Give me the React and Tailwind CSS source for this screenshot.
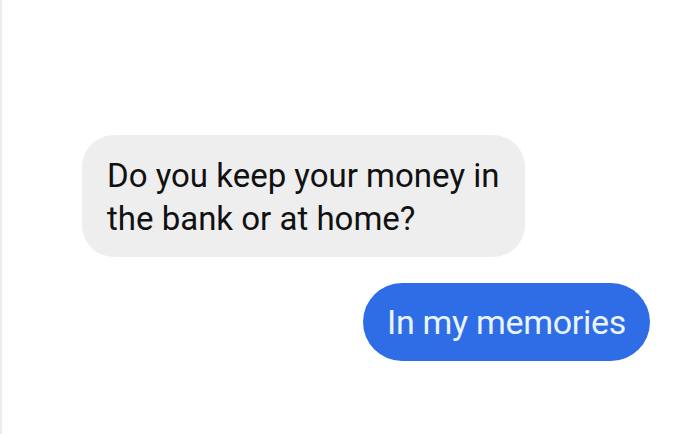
import React from "react";

const App = () => {
  return (
    <div
      className="w-[700px] h-[434px] bg-white border-l-2 border-[#ececec] flex flex-col overflow-hidden"
      style={{ fontFamily: "Roboto, 'Liberation Sans', sans-serif" }}
    >
      <div className="pt-[135px] pl-[80px]">
        <div className="w-[443px] h-[122px] bg-[#eeeeee] rounded-[32px] pl-[25px] pt-[19px] text-[33px] leading-[43px] text-[#111111] whitespace-nowrap">
          <p>Do you keep your money in</p>
          <p>the bank or at home?</p>
        </div>
      </div>
      <div className="pt-[26px] pl-[361px]">
        <div className="w-[287px] h-[78px] bg-[#2f6de6] rounded-full flex items-center justify-center text-[34px] text-[#eaf4ff] tracking-[-0.3px]">
          In my memories
        </div>
      </div>
    </div>
  );
};

export default App;
